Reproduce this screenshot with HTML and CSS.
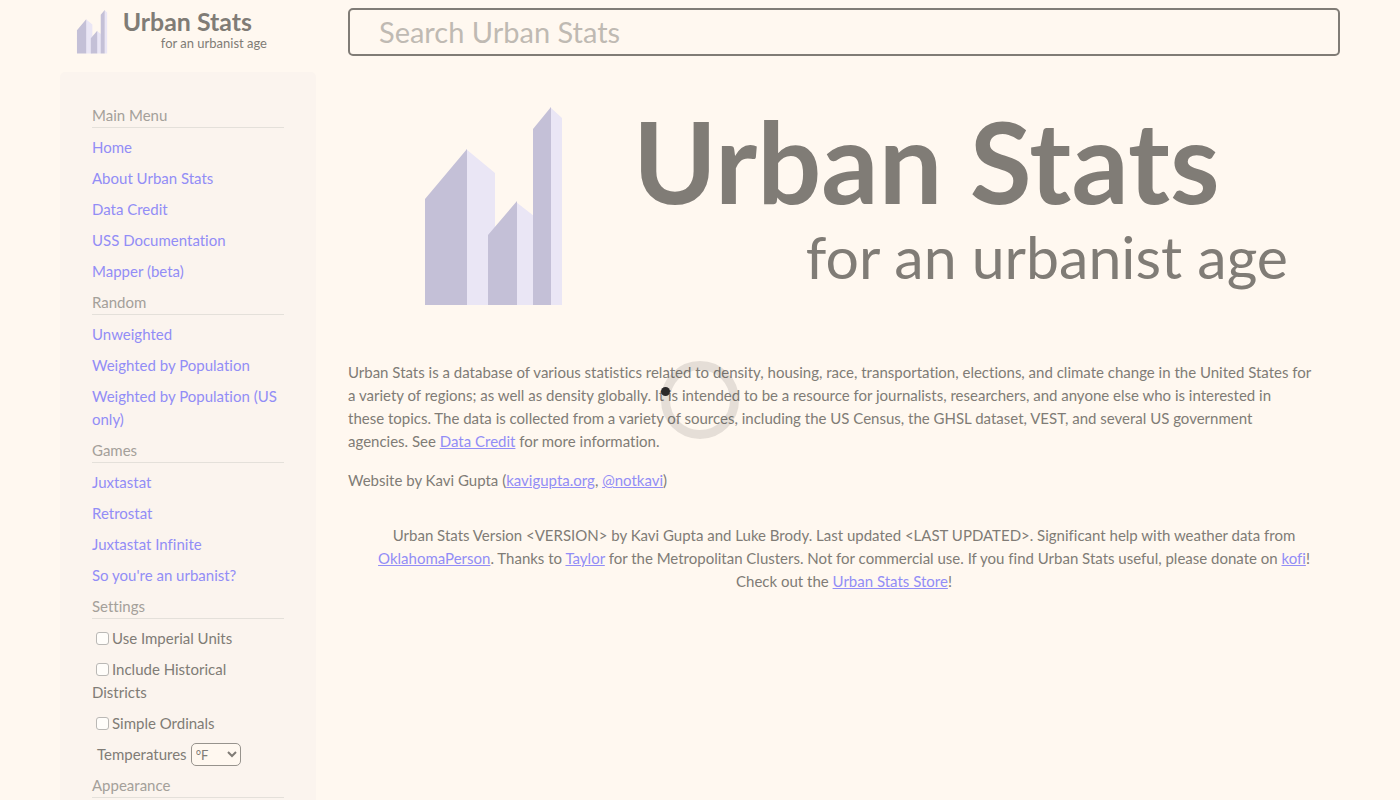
FILE: index.html
```html
<!DOCTYPE html>
<html lang="en">
<head>
<meta charset="utf-8">
<title>Urban Stats</title>
<link rel="stylesheet" href="styles.css">
</head>
<body>
<svg class="defs" aria-hidden="true">
  <symbol id="logo" viewBox="0 0 992 218">
    <path class="side-light" d="M118 51 L147 75 V207 H118Z M168 104 L186 118 V207 H168Z M202 9 L214 20 V207 H202Z"/>
    <path class="side-dark" d="M77 101 L119 51 V207 H77Z M140 137 L169 103 V207 H140Z M185 31 L203 9 V207 H185Z"/>
    <text class="logo-name" x="285" y="106">Urban Stats</text>
    <text class="logo-tagline" x="940" y="181">for an urbanist age</text>
  </symbol>
</svg>
<div class="page">
  <header class="topbar">
    <a class="home-link" href="#" aria-label="Urban Stats home"><svg class="logo" viewBox="0 0 992 218"><use href="#logo"/></svg></a>
    <input class="search" type="text" placeholder="Search Urban Stats" aria-label="Search Urban Stats">
  </header>
  <div class="columns">
    <nav class="sidebar">
      <section class="group">
        <h2 class="group-title">Main Menu</h2>
        <a href="#">Home</a>
        <a href="#">About Urban Stats</a>
        <a href="#">Data Credit</a>
        <a href="#">USS Documentation</a>
        <a href="#">Mapper (beta)</a>
      </section>
      <section class="group">
        <h2 class="group-title">Random</h2>
        <a href="#">Unweighted</a>
        <a href="#">Weighted by Population</a>
        <a href="#">Weighted by Population (US only)</a>
      </section>
      <section class="group">
        <h2 class="group-title">Games</h2>
        <a href="#">Juxtastat</a>
        <a href="#">Retrostat</a>
        <a href="#">Juxtastat Infinite</a>
        <a href="#">So you're an urbanist?</a>
      </section>
      <section class="group">
        <h2 class="group-title">Settings</h2>
        <div class="setting"><input class="check" type="checkbox" id="imperial"><label for="imperial">Use Imperial Units</label></div>
        <div class="setting"><input class="check" type="checkbox" id="historical"><label for="historical">Include Historical Districts</label></div>
        <div class="setting"><input class="check" type="checkbox" id="ordinals"><label for="ordinals">Simple Ordinals</label></div>
        <div class="temperature">
          <label for="temperature">Temperatures</label>
          <select class="select" id="temperature"><option>°F</option><option>°C</option></select>
        </div>
      </section>
      <section class="group">
        <h2 class="group-title">Appearance</h2>
      </section>
    </nav>
    <main class="content">
      <svg class="banner" viewBox="0 0 992 218" role="img" aria-label="Urban Stats, for an urbanist age"><use href="#logo"/></svg>
      <p>Urban Stats is a database of various statistics related to density, housing, race, transportation, elections, and climate change in the United States for<br>
      a variety of regions; as well as density globally. It is intended to be a resource for journalists, researchers, and anyone else who is interested in<br>
      these topics. The data is collected from a variety of sources, including the US Census, the GHSL dataset, VEST, and several US government<br>
      agencies. See <a href="#">Data Credit</a> for more information.</p>
      <p>Website by Kavi Gupta (<a href="#">kavigupta.org</a>, <a href="#">@notkavi</a>)</p>
      <footer class="credits">Urban Stats Version &lt;VERSION&gt; by Kavi Gupta and Luke Brody. Last updated &lt;LAST UPDATED&gt;. Significant help with weather data from <a href="#">OklahomaPerson</a>. Thanks to <a href="#">Taylor</a> for the Metropolitan Clusters. Not for commercial use. If you find Urban Stats useful, please donate on <a href="#">kofi</a>! Check out the <a href="#">Urban Stats Store</a>!</footer>
    </main>
  </div>
</div>
<svg class="spinner" viewBox="0 0 78 78" role="img" aria-label="Loading">
  <circle class="ring" cx="39" cy="39" r="34.5"/>
  <circle class="dot" cx="4.5" cy="30.5" r="4.5"/>
</svg>
</body>
</html>
```
FILE: styles.css
```css
* {
  box-sizing: border-box;
}

body {
  margin: 0;
  background: #fff8f0;
  color: #807c76;
  font-family: Lato, "Liberation Sans", sans-serif;
  font-size: 15px;
  font-variant-ligatures: none;
  line-height: 23px;
}

a {
  color: #928df6;
}

.defs {
  display: none;
}

.page {
  padding: 8px 60px 0;
}

.topbar,
.columns {
  display: flex;
  gap: 32px;
}

.topbar {
  margin-bottom: 16px;
}

.home-link {
  flex: 0 0 256px;
  height: 48px;
}

.logo {
  display: block;
  height: 48px;
}

.banner {
  display: block;
  width: 100%;
  margin: 26px 0 45px;
}

.side-dark {
  fill: #c4c0d7;
}

.side-light {
  fill: #eae6f5;
}

.logo-name,
.logo-tagline {
  fill: #807c76;
  font-family: Lato, sans-serif;
}

.logo-name {
  font-size: 113px;
  font-weight: 700;
}

.logo-tagline {
  font-size: 59px;
  text-anchor: end;
}

.search {
  flex: 1;
  min-width: 0;
  height: 48px;
  padding: 0 29px 2px;
  border: 2px solid #807c76;
  border-radius: 5px;
  background: transparent;
  color: #807c76;
  font-family: inherit;
  font-size: 29px;
}

.search::placeholder {
  color: #bfbab3;
}

.sidebar {
  flex: 0 0 256px;
  display: flex;
  flex-direction: column;
  gap: 8px;
  padding: 32px;
  border-radius: 5px;
  background: #fbf4ee;
}

.group {
  display: flex;
  flex-direction: column;
  gap: 8px;
}

.group a {
  text-decoration: none;
}

.group-title {
  margin: 0;
  border-bottom: 1px solid #e4e0da;
  color: #a4a09a;
  font-size: 15px;
  font-weight: 400;
}

.setting {
  padding-right: 16px;
}

.check {
  appearance: none;
  width: 13px;
  height: 13px;
  margin: 0 3px 0 4px;
  border: 1px solid #bab8b5;
  border-radius: 3px;
  background: #fffdfa;
  vertical-align: -1px;
}

.temperature {
  display: flex;
  align-items: center;
  gap: 4px;
  padding-left: 5px;
}

.select {
  width: 50px;
  height: 23px;
  padding: 0;
  border: 1px solid #97938d;
  border-radius: 5px;
  background: #fff8f0;
  color: #807c76;
  font-family: inherit;
  font-size: 13px;
}

.content {
  flex: 1;
  min-width: 0;
}

.content p {
  margin: 0 0 16px;
}

.credits {
  margin-top: 32px;
  padding: 0 16px;
  text-align: center;
}

.spinner {
  position: fixed;
  top: 50%;
  left: 50%;
  width: 78px;
  height: 78px;
  margin: -39px 0 0 -39px;
  overflow: visible;
}

.ring {
  fill: none;
  stroke: #2a2829;
  stroke-opacity: 0.12;
  stroke-width: 9px;
}

.dot {
  fill: #2a2829;
}
```
